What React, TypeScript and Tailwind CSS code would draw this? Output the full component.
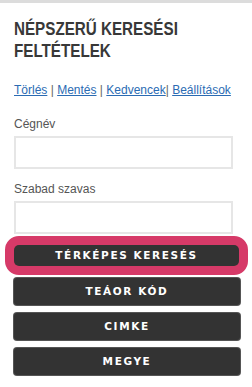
import React from "react";

const btn =
  "flex items-center justify-center bg-[#333333] text-white font-bold uppercase text-[10.5px] tracking-[1.6px] rounded-[3px] shadow-[0_0_0_1px_#555]";

const btnFont = { fontFamily: '"DejaVu Sans", "Liberation Sans", sans-serif' };

export default function App() {
  return (
    <div className="w-[252px] h-[387px] bg-white overflow-hidden" style={{ fontFamily: '"Liberation Sans", Arial, sans-serif' }}>
      <div className="h-[3px] bg-[#dcdcdc]" />
      <div className="px-[14px]">
        <h2
          className="mt-[15px] text-[#383838] font-bold uppercase text-[19px] leading-[22px] whitespace-nowrap origin-left scale-x-[0.8]"
          style={{ fontFamily: '"Liberation Sans", Arial, sans-serif' }}
        >
          Népszerű keresési
          <br />
          feltételek
        </h2>
        <div className="mt-[20px] text-[12px] leading-[16px] text-[#666] whitespace-nowrap">
          <a href="#" className="text-[#2a6bb3] underline">Törlés</a>{" "}|{" "}
          <a href="#" className="text-[#2a6bb3] underline">Mentés</a>{" "}|{" "}
          <a href="#" className="text-[#2a6bb3] underline">Kedvencek</a>|{" "}
          <a href="#" className="text-[#2a6bb3] underline">Beállítások</a>
        </div>
        <div className="mt-[18px] text-[12px] leading-[16px] text-[#555]">Cégnév</div>
        <input className="mt-[4px] block w-[219px] h-[33px] border-2 border-[#e6e6e6] bg-white outline-none" />
        <div className="mt-[12px] text-[12px] leading-[16px] text-[#555]">Szabad szavas</div>
        <input className="mt-[4px] block w-[219px] h-[33px] border-2 border-[#e6e6e6] bg-white outline-none" />
      </div>
      <div className="mt-[2px] ml-[5px] w-[243px] h-[39px] border-[9px] border-[#d63a68] rounded-[14px] bg-[#d63a68]">
        <div className={btn + " h-full rounded-[5px] shadow-none"} style={btnFont}>Térképes keresés</div>
      </div>
      <div className="px-[14px] mt-[3px] flex flex-col gap-[8px]">
        <div className={btn + " h-[27px] w-[226px]"} style={btnFont}>Teáor kód</div>
        <div className={btn + " h-[27px] w-[226px]"} style={btnFont}>Cimke</div>
        <div className={btn + " h-[27px] w-[226px]"} style={btnFont}>Megye</div>
      </div>
    </div>
  );
}
